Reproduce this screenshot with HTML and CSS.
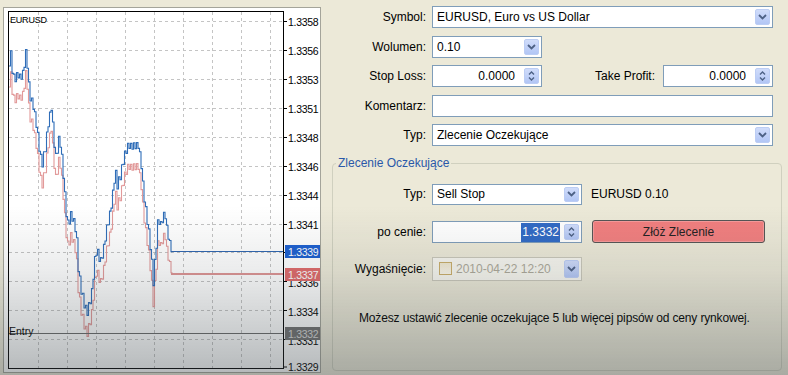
FILE: index.html
```html
<!DOCTYPE html>
<html lang="pl">
<head>
    <meta charset="UTF-8">
    <meta name="viewport" content="width=device-width, initial-scale=1.0">
    <title>Zlecenie</title>
    <link rel="stylesheet" href="styles.css">
</head>
<body>
    <div class="window">
        <div class="chart-pane">
            <svg class="chart" width="330" height="375" viewBox="0 0 330 375">
                <rect class="frame" x="3.5" y="7.5" width="317" height="365"></rect>
                <g id="grid" class="grid"></g>
                <path id="askPath" class="ask"></path>
                <path id="bidPath" class="bid"></path>
                <line class="bid-line" x1="171" y1="251.5" x2="284" y2="251.5"></line>
                <line class="ask-line" x1="171" y1="274" x2="284" y2="274"></line>
                <line class="entry-line" x1="8" y1="333.5" x2="284" y2="333.5"></line>
                <rect class="plot" x="8.5" y="11.5" width="275" height="357"></rect>
                <g id="ticks" class="ticks"></g>
                <text class="sym" x="10" y="23">EURUSD</text>
                <text class="entry" x="9" y="335">Entry</text>
                <g class="axis">
                    <text x="288" y="25.5">1.3358</text>
                    <text x="288" y="54.5">1.3356</text>
                    <text x="288" y="83.5">1.3353</text>
                    <text x="288" y="112.5">1.3351</text>
                    <text x="288" y="141.5">1.3348</text>
                    <text x="288" y="170.5">1.3346</text>
                    <text x="288" y="199.5">1.3344</text>
                    <text x="288" y="228.5">1.3341</text>
                    <text x="288" y="287">1.3336</text>
                    <text x="288" y="315.5">1.3334</text>
                    <text x="288" y="345">1.3331</text>
                    <text x="288" y="371">1.3329</text>
                </g>
                <rect class="tag-bid" x="285" y="245" width="35" height="13"></rect>
                <text class="tag-text" x="288" y="255.5">1.3339</text>
                <rect class="tag-ask" x="285" y="268" width="35" height="13"></rect>
                <text class="tag-text" x="288" y="278.5">1.3337</text>
                <rect class="tag-entry" x="285" y="327" width="35" height="13"></rect>
                <text class="tag-text light" x="288" y="337.5">1.3332</text>
            </svg>
        </div>

        <div class="form-pane">
            <div class="row">
                <span class="lbl">Symbol:</span>
                <div class="field wide">
                    <span class="text">EURUSD, Euro vs US Dollar</span>
                    <span class="drop"><svg width="9" height="6" viewBox="0 0 9 6"><path d="M1 1l3.5 3.5L8 1"/></svg></span>
                </div>
            </div>
            <div class="row">
                <span class="lbl">Wolumen:</span>
                <div class="field small">
                    <span class="text">0.10</span>
                    <span class="drop"><svg width="9" height="6" viewBox="0 0 9 6"><path d="M1 1l3.5 3.5L8 1"/></svg></span>
                </div>
            </div>
            <div class="row">
                <span class="lbl">Stop Loss:</span>
                <div class="field small num">
                    <span class="text">0.0000</span>
                    <span class="spin"><svg width="7" height="12" viewBox="0 0 7 12"><path d="M1 4.5l2.5-2.5L6 4.5M1 7.5l2.5 2.5L6 7.5"/></svg></span>
                </div>
                <span class="lbl mid">Take Profit:</span>
                <div class="field small num">
                    <span class="text">0.0000</span>
                    <span class="spin"><svg width="7" height="12" viewBox="0 0 7 12"><path d="M1 4.5l2.5-2.5L6 4.5M1 7.5l2.5 2.5L6 7.5"/></svg></span>
                </div>
            </div>
            <div class="row">
                <span class="lbl">Komentarz:</span>
                <div class="field wide"><span class="text"></span></div>
            </div>
            <div class="row">
                <span class="lbl">Typ:</span>
                <div class="field wide">
                    <span class="text">Zlecenie Oczekujące</span>
                    <span class="drop"><svg width="9" height="6" viewBox="0 0 9 6"><path d="M1 1l3.5 3.5L8 1"/></svg></span>
                </div>
            </div>

            <fieldset class="group">
                <legend>Zlecenie Oczekujące</legend>
                <div class="grow first">
                    <span class="glbl">Typ:</span>
                    <div class="field mid-w">
                        <span class="text">Sell Stop</span>
                        <span class="drop"><svg width="9" height="6" viewBox="0 0 9 6"><path d="M1 1l3.5 3.5L8 1"/></svg></span>
                    </div>
                    <span class="note">EURUSD 0.10</span>
                </div>
                <div class="grow price">
                    <span class="glbl">po cenie:</span>
                    <div class="field mid-w num">
                        <span class="text tight"><span class="sel">1.3332</span></span>
                        <span class="spin"><svg width="7" height="12" viewBox="0 0 7 12"><path d="M1 4.5l2.5-2.5L6 4.5M1 7.5l2.5 2.5L6 7.5"/></svg></span>
                    </div>
                    <button class="submit">Złóż Zlecenie</button>
                </div>
                <div class="grow expiry">
                    <span class="glbl">Wygaśnięcie:</span>
                    <div class="field mid-w disabled">
                        <span class="check"></span>
                        <span class="text">2010-04-22 12:20</span>
                        <span class="drop"><svg width="9" height="6" viewBox="0 0 9 6"><path d="M1 1l3.5 3.5L8 1"/></svg></span>
                    </div>
                </div>
                <p class="info">Możesz ustawić zlecenie oczekujące 5 lub więcej pipsów od ceny rynkowej.</p>
            </fieldset>
        </div>
    </div>
    <div class="shade"></div>

    <script>
        const NS = 'http://www.w3.org/2000/svg';
        const gridYs = [21.5, 50.5, 79.5, 108.5, 137.5, 166.5, 195.5, 224.5, 252.5, 281.5, 310.5, 339.5];
        const gridXs = [38.5, 67.5, 96.5, 125.5, 154.5, 183.5, 212.5, 241.5, 270.5];

        function addLine(parent, x1, y1, x2, y2) {
            let l = document.createElementNS(NS, 'line');
            l.setAttribute('x1', x1); l.setAttribute('y1', y1);
            l.setAttribute('x2', x2); l.setAttribute('y2', y2);
            parent.appendChild(l);
        }

        let grid = document.getElementById('grid');
        gridYs.forEach(y => addLine(grid, 9, y, 283, y));
        gridXs.forEach(x => addLine(grid, x, 12, x, 368));

        let ticks = document.getElementById('ticks');
        gridYs.concat([367]).forEach(y => addLine(ticks, 284, y, 287, y));

        // rough shape of the bid price, ask follows below it
        const bid = [[9,62],[10,48],[12,70],[14,80],[17,74],[20,78],[23,72],[26,48],[28,80],[30,98],[33,106],
            [36,124],[38,140],[40,156],[42,164],[45,148],[48,124],[51,107],[53,132],[55,158],[57,150],[59,136],
            [62,162],[64,190],[66,214],[68,226],[70,214],[73,220],[76,232],[78,268],[81,290],[84,304],[87,312],
            [90,300],[92,288],[95,254],[97,250],[100,262],[103,250],[107,226],[110,212],[113,190],[115,170],
            [117,186],[120,176],[125,152],[128,146],[133,146],[138,146],[141,166],[143,190],[146,214],[149,236],
            [151,256],[153,282],[155,256],[157,232],[158,215],[160,226],[163,216],[165,215],[167,232],[170,246],[172,251]];

        function interp(pts, x) {
            for (let i = 1; i < pts.length; i++) {
                if (x <= pts[i][0]) {
                    let [x0, y0] = pts[i - 1], [x1, y1] = pts[i];
                    return y0 + (y1 - y0) * (x - x0) / (x1 - x0);
                }
            }
            return pts[pts.length - 1][1];
        }

        function comb(pts, off, amp) {
            let d = '', i = 0, seed = 7;
            for (let x = pts[0][0]; x <= 172; x += 1.5, i++) {
                seed = (seed * 37 + 11) % 101;
                let a = amp * (0.6 + (seed % 10) / 20);
                let y = interp(pts, x) + off + (i % 2 ? -a : a);
                d += (d ? 'L' : 'M') + x.toFixed(1) + ' ' + y.toFixed(1) + 'L' + (x + 1.5).toFixed(1) + ' ' + y.toFixed(1);
            }
            return d;
        }

        document.getElementById('askPath').setAttribute('d', comb(bid, 21, 4));
        document.getElementById('bidPath').setAttribute('d', comb(bid, 0, 4));
    </script>
</body>
</html>
```

FILE: styles.css
```css
body {
    margin: 0;
    width: 788px;
    height: 375px;
    overflow: hidden;
    background: #ece9d8;
    font-family: "Liberation Sans", Arial, sans-serif;
    font-size: 12px;
    color: #000;
}
.window {
    display: flex;
    height: 375px;
}

/* chart */
.chart-pane {
    width: 330px;
    flex: none;
}
.chart {
    display: block;
}
.frame {
    fill: #fff;
    stroke: #a4a49a;
}
.grid line {
    stroke: #c4c4c4;
    stroke-dasharray: 3 3;
}
.plot {
    fill: none;
    stroke: #000;
}
.ticks line {
    stroke: #000;
}
.bid {
    fill: none;
    stroke: #2f6db8;
    stroke-width: 1.1;
}
.ask {
    fill: none;
    stroke: #e29a9a;
    stroke-width: 1.1;
}
.bid-line {
    stroke: #2f66b0;
    stroke-width: 1.2;
}
.ask-line {
    stroke: #de9494;
    stroke-width: 2;
}
.entry-line {
    stroke: #6a6a6a;
}
.sym {
    font-size: 9px;
    letter-spacing: -0.2px;
    fill: #000;
}
.entry {
    font-size: 10.5px;
    fill: #000;
}
.axis text, .tag-text {
    font-size: 10.5px;
    letter-spacing: -0.3px;
    fill: #000;
}
.tag-bid {
    fill: #1c5fd0;
}
.tag-ask {
    fill: #e06a6a;
}
.tag-entry {
    fill: #707070;
}
.tag-text {
    fill: #fff;
}
.tag-text.light {
    fill: #d8d8d8;
}

/* order form */
.form-pane {
    flex: 1;
    padding-top: 6px;
}
.row {
    display: flex;
    align-items: center;
    height: 22px;
    margin-bottom: 7.5px;
}
.lbl {
    width: 102px;
    padding-right: 6px;
    box-sizing: border-box;
    text-align: right;
    flex: none;
}
.lbl.mid {
    width: 121px;
    padding-right: 8px;
}
.field {
    display: flex;
    align-items: center;
    box-sizing: border-box;
    height: 100%;
    border: 1px solid #7f9db9;
    background: #fff;
    flex: none;
}
.field.wide {
    width: 341px;
}
.field.small {
    width: 110px;
}
.field.mid-w {
    width: 150px;
}
.field .text {
    flex: 1;
    padding-left: 4px;
    white-space: nowrap;
}
.field.num .text {
    text-align: right;
    padding-right: 9px;
}
.field.num .text.tight {
    padding-right: 4px;
}
.sel {
    background: #316ac5;
    color: #fff;
    padding: 2px 1px 3px;
}
.drop, .spin {
    display: flex;
    align-items: center;
    justify-content: center;
    width: 15px;
    height: calc(100% - 4px);
    margin-right: 2px;
    box-sizing: border-box;
    border: 1px solid #bccdf4;
    border-radius: 2px;
    background: linear-gradient(#d0dcfa, #b2c6f5);
}
.drop path, .spin path {
    fill: none;
    stroke: #4d6185;
    stroke-width: 1.8;
}
.spin path {
    stroke-width: 1.4;
}

/* the last row's margin collapses into this one */
.group {
    margin: 10px 6px 0 2px;
    padding: 0;
    height: 215px;
    box-sizing: border-box;
    border: 1px solid #d0d0bf;
    border-radius: 4px;
}
.group legend {
    margin-left: 3px;
    padding: 0 2px;
    line-height: 14px;
    color: #2a58a8;
}
.grow {
    display: flex;
    align-items: center;
}
.grow.first {
    margin-top: 13.5px;
    height: 21px;
}
.grow.price {
    margin-top: 16px;
    height: 22px;
}
.grow.expiry {
    margin-top: 14px;
    height: 24px;
}
.glbl {
    width: 99px;
    padding-right: 6px;
    box-sizing: border-box;
    text-align: right;
    flex: none;
}
.note {
    margin-left: 9px;
}
.submit {
    margin-left: 10px;
    width: 173px;
    height: 23px;
    border: 1px solid #555;
    border-radius: 3px;
    background: #f27f7f;
    box-shadow: inset 0 0 0 1px #f79a9a;
    font-family: inherit;
    font-size: 12px;
    color: #222;
    padding: 0;
}
.field.disabled {
    background: #f7f6ef;
    border-color: #c9c7ba;
}
.field.disabled .text {
    color: #aca899;
    padding-left: 4px;
}
.check {
    width: 11px;
    height: 11px;
    margin-left: 6px;
    border: 1px solid #c9ad6a;
    background: linear-gradient(#efe7cf, #faf6ea);
    flex: none;
}
.info {
    margin: 30px 0 0 26px;
    line-height: 14px;
    letter-spacing: -0.15px;
}

.shade {
    position: fixed;
    inset: 0;
    pointer-events: none;
    background: linear-gradient(to bottom, rgba(60, 70, 75, 0) 55%, rgba(60, 70, 75, 0.1) 72%, rgba(60, 70, 75, 0.38) 100%);
}
```
